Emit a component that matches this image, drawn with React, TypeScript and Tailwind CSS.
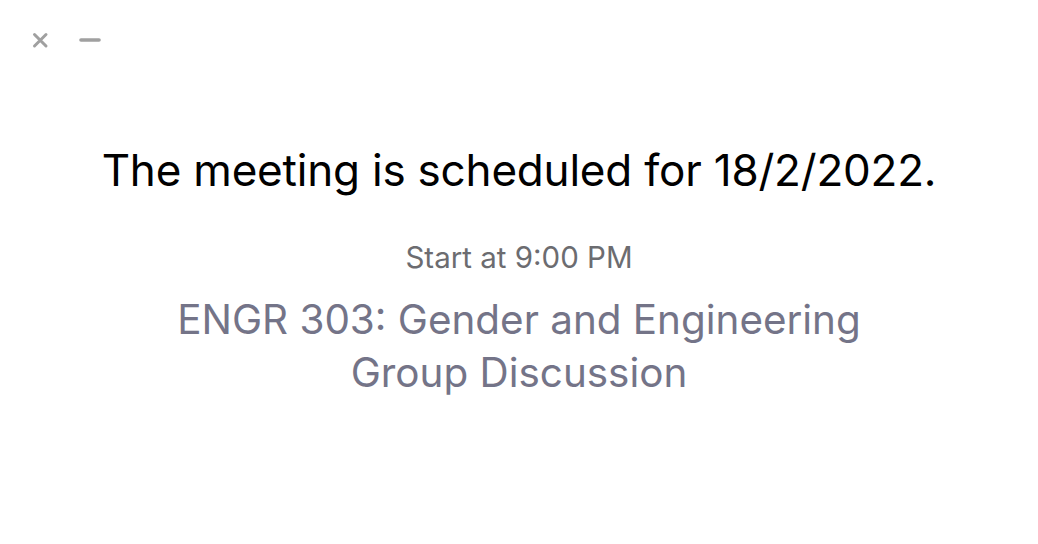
import React from "react";

export default function App() {
  return (
    <div
      className="w-[1038px] h-[544px] bg-white flex flex-col"
      style={{ fontFamily: "Inter, 'Noto Sans', sans-serif" }}
    >
      <div className="flex items-center gap-[30px] pl-[31px] pt-[30px] h-[50px]">
        <svg width="18" height="18" viewBox="0 0 18 18">
          <path d="M3.5 3.5 L15 15 M15 3.5 L3.5 15" stroke="#a0a0a0" strokeWidth="3" strokeLinecap="round" />
        </svg>
        <svg width="22" height="18" viewBox="0 0 22 18">
          <path d="M2 9 L20 9" stroke="#a0a0a0" strokeWidth="3.6" strokeLinecap="round" />
        </svg>
      </div>
      <div className="flex flex-col items-center pt-[94px]">
        <div className="text-[44px] leading-[52px] text-black tracking-[-0.2px]">
          The meeting is scheduled for 18/2/2022.
        </div>
        <div className="mt-[43px] text-[29.5px] leading-[36px] text-[#6c6c70]">Start at 9:00 PM</div>
        <div className="mt-[18px] text-[40.4px] leading-[53px] text-[#747488] text-center w-[760px]">
          ENGR 303: Gender and Engineering Group Discussion
        </div>
      </div>
    </div>
  );
}
